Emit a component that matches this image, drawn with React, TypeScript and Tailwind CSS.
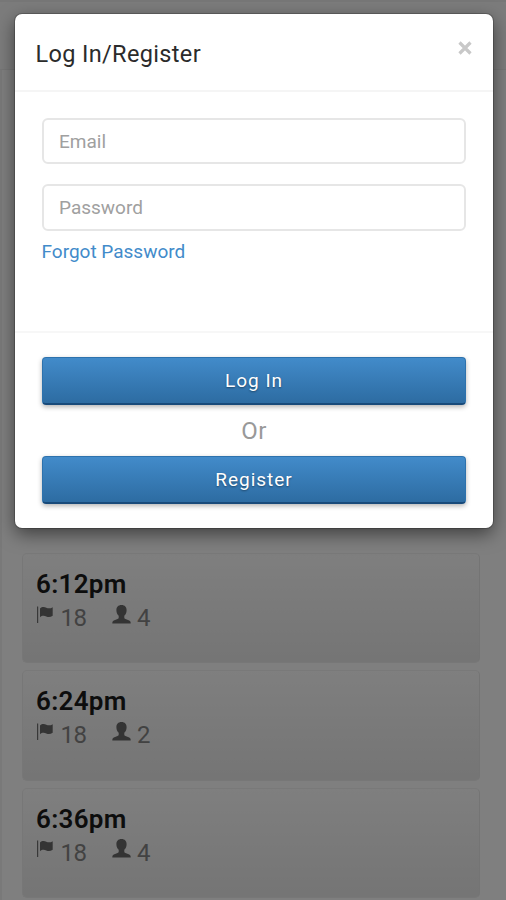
// App.tsx
const teeTimes = [
  { time: '6:12pm', holes: 18, players: 4 },
  { time: '6:24pm', holes: 18, players: 2 },
  { time: '6:36pm', holes: 18, players: 4 },
];

function FlagIcon() {
  return (
    <svg viewBox="0 0 18 18" className="h-[18px] w-[18px]" aria-hidden="true">
      <path d="M1 0.5h1.2v16.5h-1.2z" fill="#707070" />
      <path
        d="M4 2.400C6 0.6 8.300 0.700 10.300 1.700c2 1 4.200 0.9 6.400-0.500v8.600c-2.200 1.500-4.400 1.600-6.400 0.700C8.300 9.600 6 9.500 4 11.200z"
        fill="#686868"
      />
    </svg>
  );
}

function UserIcon() {
  return (
    <svg viewBox="0 0 19 19" className="h-[19px] w-[19px]" fill="#686868" aria-hidden="true">
      <path d="M9.500 0C12.900 0 14.600 2.100 14.600 5.200c0 2.300-0.900 4.300-2.300 5.500v1.800c0 0.800 0.400 1.200 1.200 1.600l3.700 1.500c1 0.400 1.500 1.300 1.500 2.900H0.300c0-1.600 0.500-2.500 1.500-2.900l3.700-1.500c0.800-0.400 1.200-0.800 1.200-1.600v-1.800C5.300 9.500 4.400 7.500 4.400 5.200 4.400 2.100 6.100 0 9.500 0z" />
    </svg>
  );
}

export default function App() {
  return (
    <div className="relative h-[900px] w-full overflow-hidden bg-white font-['Roboto',sans-serif]">
      {/* Page behind the modal */}
      <div className="flex h-full flex-col">
        <div className="h-[70px] shrink-0 border-t-2 border-b border-[#eee] bg-[#f8f8f8]" />
        <div className="flex grow flex-col gap-[7px] border-l-2 border-[#f2f2f2] pt-[483px] pr-[26px] pl-5">
          {teeTimes.map((tee) => (
            <div
              key={tee.time}
              className="h-[110.400px] shrink-0 rounded-[5px] border border-[#efefef] border-t-[#f2f2f2] border-r-[#e8e8e8] bg-linear-to-b from-[#fefefe] to-[#eaeaea] pt-[15px] pl-[13px]"
            >
              <div className="text-[26px] leading-[30px] font-semibold tracking-[0.3px] text-[#1a1a1a]">{tee.time}</div>
              <div className="flex h-[36px] text-[24px] leading-[38px] text-[#858585]">
                <span className="pt-[6.500px]">
                  <FlagIcon />
                </span>
                <span className="ml-[6.500px] w-[51.500px] tracking-[-0.5px]">{tee.holes}</span>
                <span className="pt-[5.500px]">
                  <UserIcon />
                </span>
                <span className="ml-[6px]">{tee.players}</span>
              </div>
            </div>
          ))}
        </div>
      </div>

      {/* Backdrop */}
      <div className="absolute inset-0 bg-black/50 pt-[14px] pr-[13.500px] pl-[14.500px]">
        {/* Modal */}
        <div className="h-[514px] rounded-[7px] bg-white shadow-[0_0_0_1px_rgba(0,0,0,0.2),0_6px_18px_rgba(0,0,0,0.5)]">
          <div className="flex h-[78px] justify-between border-b-2 border-[#f5f5f5] pr-[21px] pl-[21px]">
            <h4 className="pt-[25px] text-[23.500px] leading-[30px] tracking-[0.35px] text-[#2b2b2b]">Log In/Register</h4>
            <button type="button" aria-label="Close" className="mt-[26px] flex h-[15px] items-center">
              <svg viewBox="0 0 14 14" className="h-[14px] w-[14px]" aria-hidden="true">
                <path d="M1.500 1.500l11 11M12.500 1.500l-11 11" stroke="#c8c8c8" strokeWidth="3.200" />
              </svg>
            </button>
          </div>

          <div className="flex h-[240.500px] flex-col border-b-2 border-[#f7f7f7] px-[27px] pt-[26px]">
            <input
              type="email"
              placeholder="Email"
              className="h-[46px] shrink-0 rounded-[6px] border-2 border-[#e6e6e6] px-[15.500px] text-[19px] placeholder:text-[#a0a0a0]"
            />
            <input
              type="password"
              placeholder="Password"
              className="mt-5 h-[47px] shrink-0 rounded-[6px] border-2 border-[#e6e6e6] px-[15.500px] text-[19px] placeholder:text-[#a0a0a0]"
            />
            <a href="#" className="mt-[7.500px] self-start text-[19px] leading-[26px] text-[#428bca]">
              Forgot Password
            </a>
          </div>

          <div className="flex flex-col px-[27px] pt-[24.500px]">
            <button
              type="button"
              className="h-[48px] rounded-[4px] border border-[#2d72ad] border-b-2 border-b-[#184a7a] bg-linear-to-b from-[#428bca] to-[#2d6ca2] pt-[2px] pl-px text-[19px] tracking-[1px] text-white shadow-[0_2px_5px_rgba(0,0,0,0.3)] [text-shadow:0_1px_2px_rgba(0,0,0,0.4)]"
            >
              Log In
            </button>
            <div className="h-[51px] pl-px text-center text-[24px] leading-[52px] tracking-[0.5px] text-[#999]">Or</div>
            <button
              type="button"
              className="h-[48px] rounded-[4px] border border-[#2d72ad] border-b-2 border-b-[#184a7a] bg-linear-to-b from-[#428bca] to-[#2d6ca2] pt-[2px] pl-px text-[19px] tracking-[1px] text-white shadow-[0_2px_5px_rgba(0,0,0,0.3)] [text-shadow:0_1px_2px_rgba(0,0,0,0.4)]"
            >
              Register
            </button>
          </div>
        </div>
      </div>
    </div>
  );
}
